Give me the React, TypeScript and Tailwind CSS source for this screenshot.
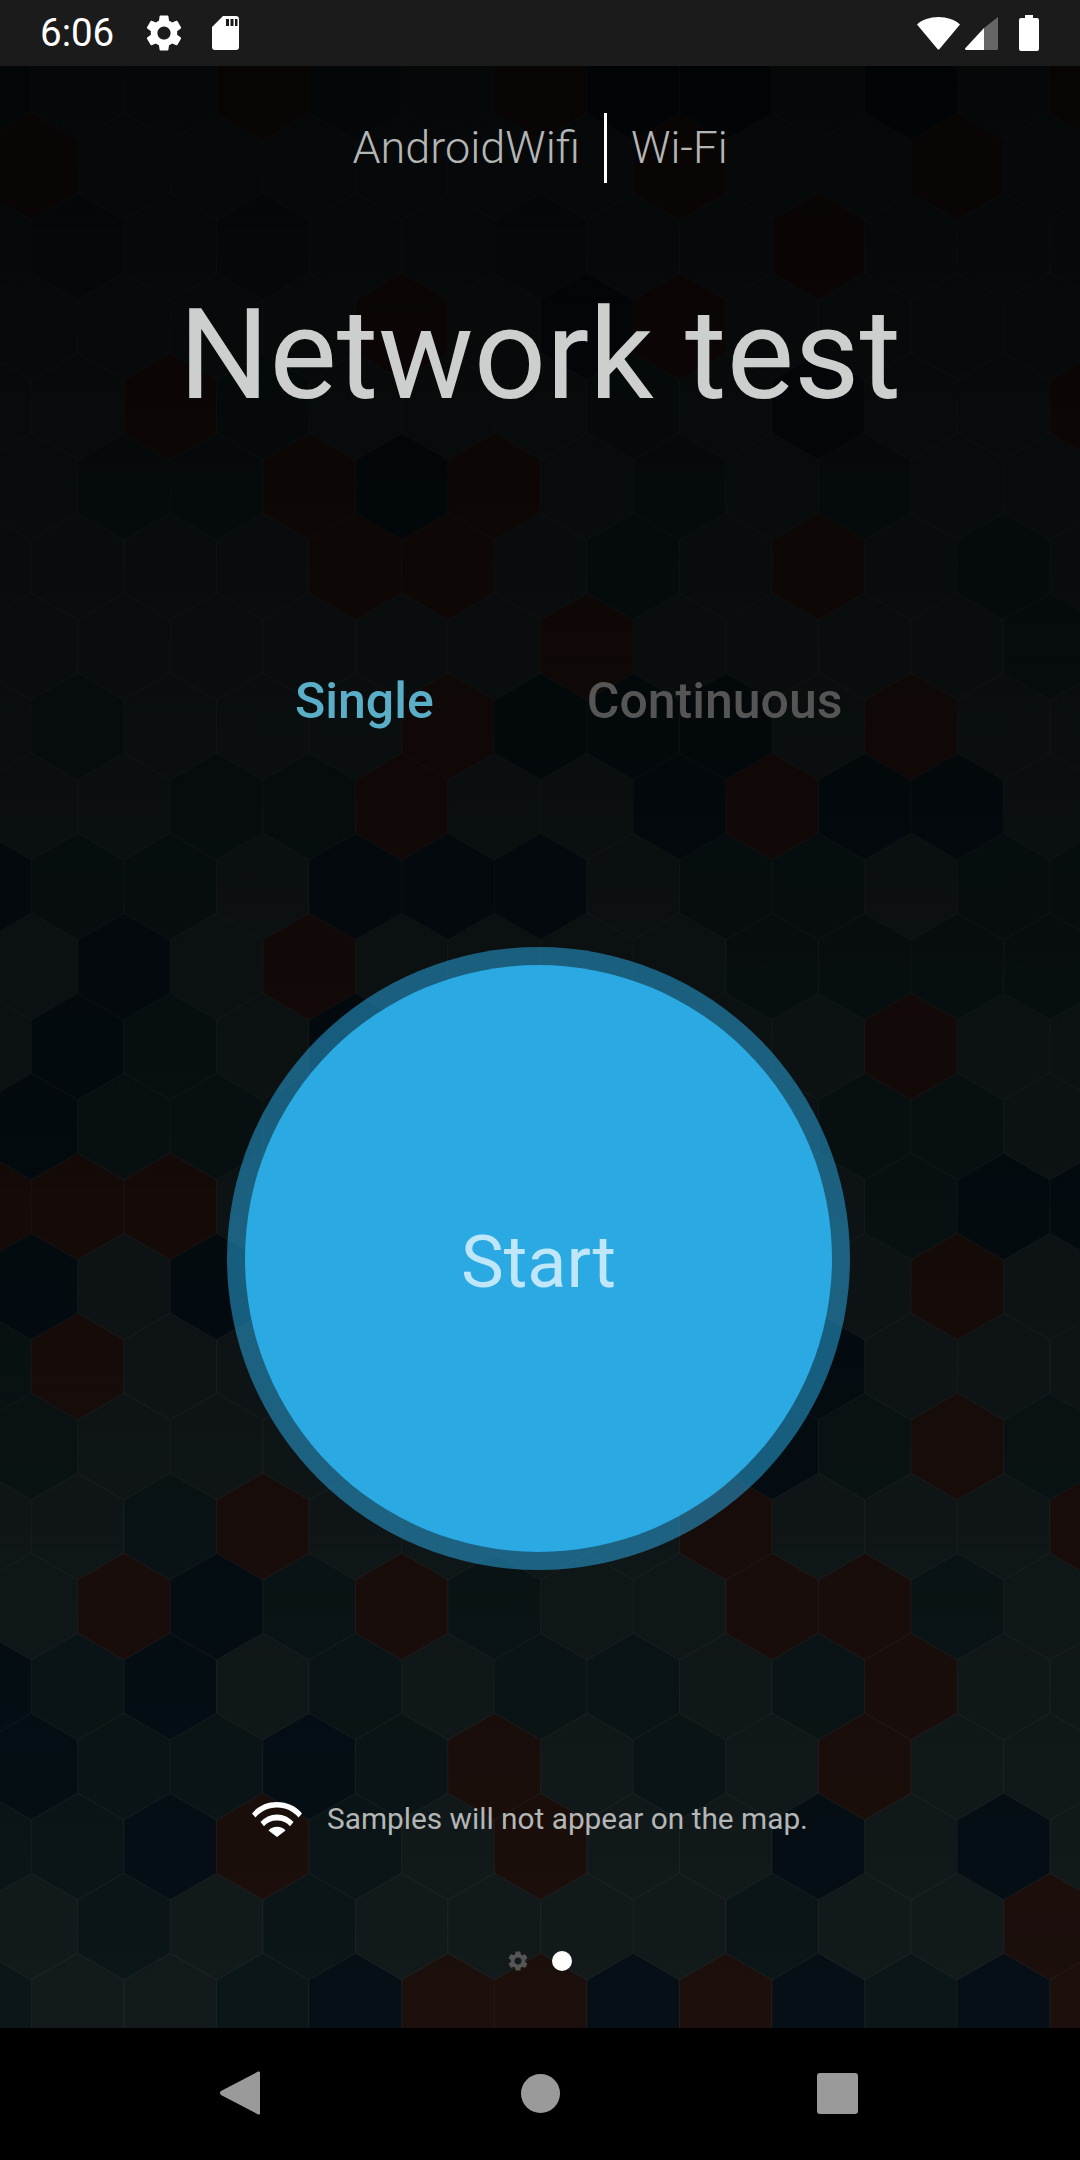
import React from 'react';

const GEAR =
  'M19.14 12.94c.04-.3.06-.61.06-.94 0-.32-.02-.64-.07-.94l2.03-1.58c.18-.14.23-.41.12-.61l-1.92-3.32c-.12-.22-.37-.29-.59-.22l-2.39.96c-.5-.38-1.03-.7-1.62-.94l-.36-2.54c-.04-.24-.24-.41-.48-.41h-3.84c-.24 0-.43.17-.47.41l-.36 2.54c-.59.24-1.13.57-1.62.94l-2.39-.96c-.22-.08-.47 0-.59.22L2.74 8.87c-.12.21-.08.47.12.61l2.03 1.58c-.05.3-.09.63-.09.94s.02.64.07.94l-2.03 1.58c-.18.14-.23.41-.12.61l1.92 3.32c.12.22.37.29.59.22l2.39-.96c.5.38 1.03.7 1.62.94l.36 2.54c.05.24.24.41.48.41h3.84c.24 0 .44-.17.47-.41l.36-2.54c.59-.24 1.13-.56 1.62-.94l2.39.96c.22.08.47 0 .59-.22l1.92-3.32c.12-.22.07-.47-.12-.61l-2.01-1.58zM12 15.6c-1.98 0-3.6-1.62-3.6-3.6s1.62-3.6 3.6-3.6 3.6 1.62 3.6 3.6-1.62 3.6-3.6 3.6z';

// hex colours per row, top to bottom: n neutral, t teal, b blue-black, r red
const HEX_ROWS = [
  'tnnrtnrbbnbnr',
  'rnnnnnnrnnrn',
  'ntntnntnnrnnn',
  'nnnnrnbrnnnn',
  'nnrtnnntnbnnr',
  'nttrbrntntnn',
  'nnnnrrntnrntn',
  'nnnnnnrnnnnt',
  'ntnnnrbbbnrnn',
  'nnttrnnbrbbn',
  'bttnbbbnttntt',
  'nbnrnnnntttt',
  'nbtnbnnnnnrnn',
  'btttnnnnnttn',
  'rrrnnnnnnntbb',
  'bnbnnnnnnnrn',
  'trnnnnnnnbnnn',
  'tnnnnnnnbtrt',
  'nntrnnnnrnnnr',
  'nrbtrtnnrrtn',
  'btbntnttntrnn',
  'bttbtrntnrnn',
  'ttbrtnrnnbnbn',
  'ntntnnnntnnr',
  'tnntbrrbrbtbr',
];

const HEX_FILL: Record<string, string> = {
  n: '#121a1c',
  t: '#0b1618',
  b: '#050f15',
  r: '#1c0f0c',
};

const HEX_W = 92.6;
const HEX_STEP = 80;
const HEX_SIDE = 53.46;

function hexPoints(cx: number, cy: number) {
  const hw = HEX_W / 2;
  const s = HEX_SIDE / 2;
  return [
    [cx, cy - HEX_SIDE],
    [cx + hw, cy - s],
    [cx + hw, cy + s],
    [cx, cy + HEX_SIDE],
    [cx - hw, cy + s],
    [cx - hw, cy - s],
  ]
    .map((p) => p.join(','))
    .join(' ');
}

// the svg starts under the status bar, so every y is shifted by 66
const HexBackground = () => (
  <svg className="absolute inset-0 w-full h-full" viewBox="0 0 1080 1962" preserveAspectRatio="none">
    <defs>
      <linearGradient id="shade" x1="0" y1="0" x2="0" y2="1">
        <stop offset="0" stopColor="#000" stopOpacity="0.72" />
        <stop offset="0.55" stopColor="#000" stopOpacity="0.32" />
        <stop offset="1" stopColor="#000" stopOpacity="0" />
      </linearGradient>
    </defs>
    {HEX_ROWS.map((row, r) =>
      row.split('').map((kind, c) => {
        const odd = r % 2 === 1;
        const cx = (odd ? 31.4 : -15) + HEX_W * c;
        const cy = 86.7 + HEX_STEP * r - 66;
        return (
          <polygon
            key={`${r}-${c}`}
            points={hexPoints(cx, cy)}
            fill={HEX_FILL[kind]}
            stroke="#ffffff"
            strokeOpacity="0.05"
            strokeWidth="1"
          />
        );
      })
    )}
    <rect x="0" y="0" width="1080" height="1962" fill="url(#shade)" />
  </svg>
);

const StatusBar = () => (
  <div className="h-[66px] bg-[#1b1b1b] flex items-center pl-[40px] pr-[41px] text-white shrink-0">
    <span className="text-[38.500px] leading-[38px]">6:06</span>
    <svg className="ml-[28px] w-[44px] h-[44px]" viewBox="0 0 24 24" fill="#fff">
      <path d={GEAR} />
    </svg>
    <svg className="ml-[26px] w-[27px] h-[34px]" viewBox="0 0 27 34" fill="#fff">
      <path
        fillRule="evenodd"
        d="M11 0h13a3 3 0 0 1 3 3v28a3 3 0 0 1-3 3H3a3 3 0 0 1-3-3V11zM14 3v7h3V3zM18.500 3v7h3V3zM23 3v7h2.500V3z"
      />
    </svg>
    <div className="flex-1" />
    <svg className="w-[43px] h-[33px]" viewBox="0 0 43 33" fill="#fff">
      <path d="M0 7.500C5 2.800 13 0 21.500 0S38 2.800 43 7.500L22.500 32a1.300 1.300 0 0 1-2 0z" />
    </svg>
    <svg className="ml-[5px] w-[33px] h-[33px]" viewBox="0 0 33 33">
      <path d="M0 31.500 19 11v22H1.500A1.500 1.500 0 0 1 0 31.500z" fill="#fff" />
      <path d="M19 11 33 0v31.500a1.500 1.500 0 0 1-1.500 1.500H19z" fill="#666" />
    </svg>
    <svg className="ml-[21px] w-[20px] h-[36px]" viewBox="0 0 20 36" fill="#fff">
      <path d="M6 0h8v3h4a2 2 0 0 1 2 2v29a2 2 0 0 1-2 2H2a2 2 0 0 1-2-2V5a2 2 0 0 1 2-2h4z" />
    </svg>
  </div>
);

const WifiSmall = () => (
  <svg className="w-[50px] h-[35px]" viewBox="0 0 50 35" fill="#fff">
    <path d="M0 11.500C6 4 15 0 25 0s19 4 25 11.500l-3.500 4C41.500 9.500 34 5.500 25 5.500S8.500 9.500 3.500 15.500z" />
    <path d="M8.500 20C12.500 15.500 18.500 12.500 25 12.500S37.500 15.500 41.500 20L38 24.200C35 20.500 30.500 18.500 25 18.500S15 20.500 12 24.200z" />
    <path d="M16.500 28.500C18.500 26 21.500 24.800 25 24.800S31.500 26 33.500 28.500L25 35z" />
  </svg>
);

const NavBar = () => (
  <div className="h-[132px] bg-black shrink-0 flex items-center pl-[220px] pb-[2px]">
    <svg className="w-[40px] h-[44px]" viewBox="0 0 40 44" fill="#9a9a9a">
      <path d="M38 .600a1.300 1.300 0 0 1 2 1V42.400a1.300 1.300 0 0 1-2 1L1 24a2.500 2.500 0 0 1 0-4z" />
    </svg>
    <div className="ml-[261px] w-[39px] h-[39px] rounded-full bg-[#9a9a9a]" />
    <div className="ml-[257px] w-[41px] h-[41px] rounded-[3px] bg-[#9a9a9a]" />
  </div>
);

export default function App() {
  return (
    <div
      className="w-full h-[2160px] flex flex-col overflow-hidden bg-black"
      style={{ fontFamily: 'Roboto, sans-serif' }}
    >
      <StatusBar />

      <main className="relative flex-1 flex flex-col min-h-0">
        <HexBackground />

        <div className="relative flex flex-col">
          {/* Network name */}
          <div className="mt-[47px] h-[70px] flex items-center justify-center">
            <span className="text-[45px] leading-[44px] font-light text-[#b4b6b6]">AndroidWifi</span>
            <div className="mx-[24px] w-[3px] h-[70px] bg-white" />
            <span className="text-[44px] leading-[44px] font-light text-[#b4b6b6]">Wi-Fi</span>
          </div>

          <h1 className="mt-[109px] text-center text-[127px] leading-[126px] font-normal text-[#cdcfcf]">
            Network test
          </h1>

          {/* Mode tabs */}
          <div className="mt-[260px] pl-[295px] flex gap-[153px] text-[50px] leading-[47px] font-medium">
            <span className="text-[#5aaec8]">Single</span>
            <span className="text-[#555555]">Continuous</span>
          </div>

          {/* Start button */}
          <div className="mt-[222px] ml-[227px] w-[623px] h-[623px] rounded-full bg-[#2aa9e3]/[0.52] flex items-center justify-center">
            <button className="w-[587px] h-[587px] rounded-full bg-[#2aa9e3] text-[#c0e7f9] text-[72px] leading-[71px] font-normal pt-[7px]">
              Start
            </button>
          </div>

          {/* Notice */}
          <div className="mt-[231px] pl-[252px] h-[36px] flex items-center">
            <WifiSmall />
            <span className="ml-[25px] text-[29.800px] leading-[36px] font-normal text-[#b4b6b6]">
              Samples will not appear on the map.
            </span>
          </div>

          {/* Pager */}
          <div className="mt-[112px] pl-[506px] h-[24px] flex items-center">
            <svg className="w-[24px] h-[24px]" viewBox="0 0 24 24" fill="#555">
              <path d={GEAR} />
            </svg>
            <div className="ml-[22px] w-[20px] h-[20px] rounded-full bg-white" />
          </div>
        </div>
      </main>

      <NavBar />
    </div>
  );
}
